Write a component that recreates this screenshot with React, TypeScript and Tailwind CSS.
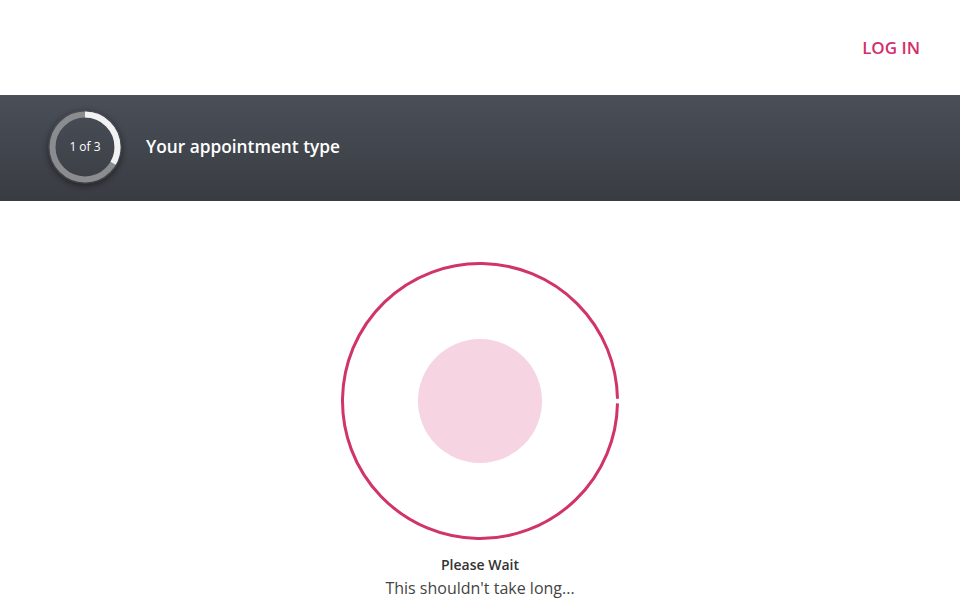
import React from "react";

function StepRing() {
  const r = 32.5;
  const c = 2 * Math.PI * r;
  return (
    <div className="relative w-[74px] h-[74px] rounded-full shadow-[0_2px_6px_rgba(0,0,0,0.45)]">
      <svg width="74" height="74" viewBox="0 0 74 74" className="absolute inset-0">
        <circle cx="37" cy="37" r={r} fill="none" stroke="#8a8c8f" strokeWidth="6" />
        <circle
          cx="37"
          cy="37"
          r={r}
          fill="none"
          stroke="#f2f2f2"
          strokeWidth="6"
          strokeDasharray={`${c / 3} ${c}`}
          transform="rotate(-90 37 37)"
        />
      </svg>
      <div className="absolute inset-0 flex items-center justify-center text-[12px] text-white">1 of 3</div>
    </div>
  );
}

function Loader() {
  const r = 137.5;
  const c = 2 * Math.PI * r;
  return (
    <svg width="282" height="282" viewBox="0 0 282 282">
      <circle
        cx="141"
        cy="141"
        r={r}
        fill="none"
        stroke="#d1336b"
        strokeWidth="3"
        strokeDasharray={`${c - 5} 5`}
        transform="rotate(1 141 141)"
      />
      <circle cx="141" cy="141" r="62" fill="#f6d4e1" />
    </svg>
  );
}

export default function App() {
  return (
    <div className="w-[960px] h-[600px] overflow-hidden bg-white font-['Open_Sans',sans-serif]">
      <div className="h-[95px] flex items-center justify-end pr-[40px]">
        <span className="text-[17px] text-[#d1306a] font-semibold">LOG IN</span>
      </div>
      <div className="h-[106px] bg-gradient-to-b from-[#4a4f58] to-[#393c42] flex items-center pl-[48px] gap-[24px] pb-[2px]">
        <StepRing />
        <span className="text-white text-[17.3px] font-semibold">Your appointment type</span>
      </div>
      <div className="flex flex-col items-center pt-[59px]">
        <Loader />
        <div className="mt-[13px] text-[14px] font-semibold text-[#333] leading-[20px]">Please Wait</div>
        <div className="text-[16px] text-[#444] leading-[26px]">This shouldn't take long...</div>
      </div>
    </div>
  );
}
